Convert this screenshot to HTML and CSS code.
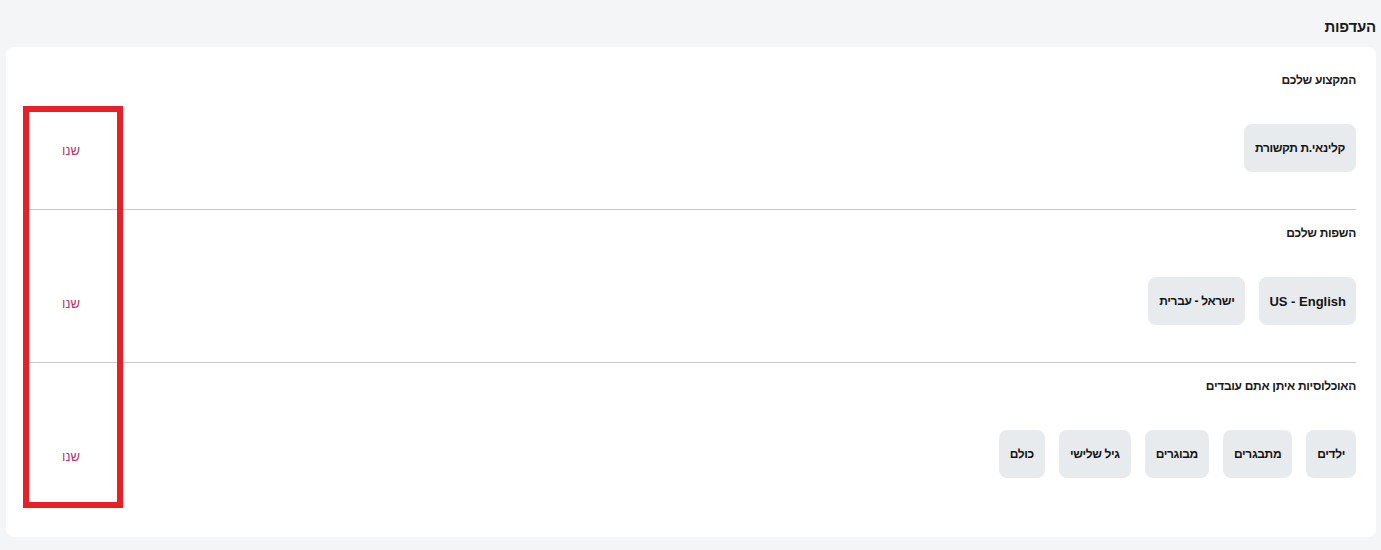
FILE: index.html
```html
<!DOCTYPE html>
<html lang="he" dir="rtl">
<head>
<meta charset="utf-8">
<title>העדפות</title>
<link rel="stylesheet" href="styles.css">
</head>
<body>
<div class="page">
  <h1 class="page-title">העדפות</h1>
  <div class="card">
    <section class="row">
      <h2 class="row-title">המקצוע שלכם</h2>
      <div class="row-body">
        <div class="chips">
          <span class="chip">קלינאי.ת תקשורת</span>
        </div>
        <a class="edit" href="#">שנו</a>
      </div>
    </section>
    <section class="row">
      <h2 class="row-title">השפות שלכם</h2>
      <div class="row-body">
        <div class="chips">
          <span class="chip chip-latin">US - English</span>
          <span class="chip">ישראל - עברית</span>
        </div>
        <a class="edit" href="#">שנו</a>
      </div>
    </section>
    <section class="row">
      <h2 class="row-title">האוכלוסיות איתן אתם עובדים</h2>
      <div class="row-body">
        <div class="chips">
          <span class="chip">ילדים</span>
          <span class="chip">מתבגרים</span>
          <span class="chip">מבוגרים</span>
          <span class="chip">גיל שלישי</span>
          <span class="chip">כולם</span>
        </div>
        <a class="edit" href="#">שנו</a>
      </div>
    </section>
  </div>
  <div class="highlight"></div>
</div>
</body>
</html>
```

FILE: styles.css
```css
html, body {
  margin: 0;
  padding: 0;
}
body {
  background: #f4f5f7;
  font-family: "Liberation Sans", Arial, sans-serif;
  color: #1f1f1f;
  width: 1381px;
  height: 550px;
  overflow: hidden;
}
.page {
  position: relative;
  padding: 0 5px 0 6px;
}
.page-title {
  margin: 0;
  padding: 17px 0 10px 0;
  font-size: 15px;
  letter-spacing: -0.2px;
  line-height: 20px;
  font-weight: bold;
  color: #1a1a1a;
}
.card {
  background: #ffffff;
  border-radius: 8px;
  padding: 10px 20px 22px 20px;
}
.row {
  padding: 15px 0 37px 0;
  border-bottom: 1px solid #c8c8c8;
}
.row:last-child {
  border-bottom: none;
}
.row-title {
  margin: 0;
  font-size: 12px;
  letter-spacing: -0.3px;
  line-height: 16px;
  font-weight: bold;
  color: #1a1a1a;
}
.row-body {
  display: flex;
  align-items: center;
  justify-content: space-between;
  margin-top: 36px;
}
.chips {
  display: flex;
  gap: 14px;
}
.chip {
  display: flex;
  align-items: center;
  height: 48px;
  padding: 0 11px;
  border-radius: 8px;
  background: #e8ebed;
  font-size: 12px;
  letter-spacing: -0.35px;
  font-weight: bold;
  color: #141414;
}
.chip-latin {
  font-size: 13px;
  letter-spacing: 0;
  padding: 0 10px;
}
.edit {
  font-size: 13px;
  color: #c0306e;
  text-decoration: none;
  margin-left: 36px;
  margin-top: 4px;
}
.highlight {
  position: absolute;
  left: 23px;
  top: 106px;
  width: 88px;
  height: 390px;
  border: 6px solid #e81f25;
}
```
